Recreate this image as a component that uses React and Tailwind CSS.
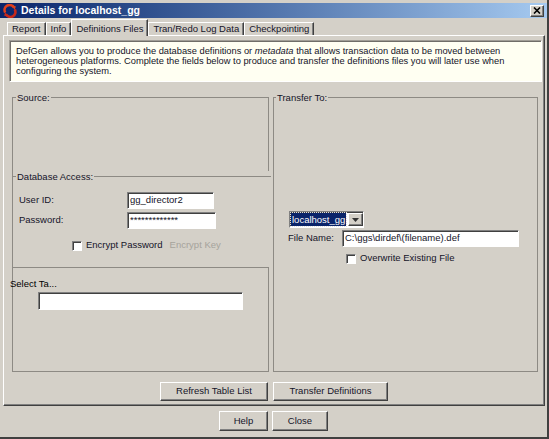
import React from "react";

// Win2000 style bevels
const raised =
  "border border-t-white border-l-white border-r-[#404040] border-b-[#404040] shadow-[inset_-1px_-1px_0_#808080]";
const sunken =
  "border border-t-[#808080] border-l-[#808080] border-r-white border-b-white shadow-[inset_1px_1px_0_#404040]";
const groove = "border-[#8d8a84]";

function Logo() {
  return (
    <svg width="14" height="14" viewBox="0 0 14 14" className="shrink-0">
      <path d="M2.2 8.5 A5 5 0 0 1 11 3.6" fill="none" stroke="#e0401c" strokeWidth="2.6" />
      <path d="M11.8 5.5 A5 5 0 0 1 3 10.4" fill="none" stroke="#c8281a" strokeWidth="2.6" />
      <path d="M9.2 1.2 L13 2.4 L11.4 6 Z" fill="#e0401c" />
      <path d="M4.8 12.8 L1 11.6 L2.6 8 Z" fill="#c8281a" />
    </svg>
  );
}

function Checkbox() {
  return <span className={`w-[10px] h-[10px] bg-white shrink-0 ${sunken}`} />;
}

function GroupLabel({ children, className = "" }) {
  return (
    <span
      className={`self-start -mt-[6px] px-[1px] bg-[#d4d0c8] leading-[11px] whitespace-nowrap ${className}`}
    >
      {children}
    </span>
  );
}

function Tab({ label, active }) {
  if (active) {
    return (
      <div className="relative z-10 -mb-[1px] h-[17px] px-[4px] flex items-start pt-[2px] bg-[#d4d0c8] border-t border-l border-white border-r border-r-[#404040] shadow-[inset_-1px_0_0_#808080]">
        {label}
      </div>
    );
  }
  return (
    <div className="h-[13px] px-[4px] flex items-center bg-[#d4d0c8] border-t border-l border-white border-r border-r-[#404040] shadow-[inset_-1px_0_0_#808080]">
      {label}
    </div>
  );
}

export default function App() {
  return (
    <div className="w-[549px] h-[439px] bg-[#d4d0c8] flex flex-col border-r-2 border-b-2 border-[#404040] font-['Liberation_Sans',Arial,sans-serif] text-[9.5px] text-[#141428] overflow-hidden">
      {/* Title bar */}
      <div className="mt-[3px] h-[15px] flex items-center bg-linear-to-r from-[#0a246a] to-[#a6caf0] pl-[3px] pr-[3px]">
        <Logo />
        <span className="ml-[4px] text-white font-bold text-[10.5px] leading-none">
          Details for localhost_gg
        </span>
        <div className={`ml-auto w-[14px] h-[12px] bg-[#d4d0c8] flex items-center justify-center ${raised}`}>
          <svg width="8" height="7" viewBox="0 0 8 7">
            <path d="M1 0.5 L7 6.5 M7 0.5 L1 6.5" stroke="#000" strokeWidth="1.6" />
          </svg>
        </div>
      </div>

      {/* Tabs */}
      <div className="mt-[1px] h-[16px] flex items-end pl-[7px]">
        <Tab label="Report" />
        <Tab label="Info" />
        <Tab label="Definitions Files" active />
        <Tab label="Tran/Redo Log Data" />
        <Tab label="Checkpointing" />
      </div>

      {/* Tab panel */}
      <div className="ml-[3px] w-[542px] h-[371px] flex flex-col border-t border-l border-white border-r border-b border-r-[#404040] border-b-[#404040] shadow-[inset_-1px_-1px_0_#808080]">
        <div className="mt-[4px] ml-[5px] w-[533px] h-[42px] bg-[#fffff2] border border-[#a09d96] border-b-white border-r-white shadow-[inset_1px_1px_0_#6f6d68] pl-[6px] pt-[5px] text-[9.3px] leading-[10px] whitespace-nowrap">
          DefGen allows you to produce the database definitions or <i>metadata</i> that allows transaction data to be moved between
          <br />
          heterogeneous platforms. Complete the fields below to produce and transfer the definitions files you will later use when
          <br />
          configuring the system.
        </div>

        <div className="mt-[15px] ml-[8px] flex">
          {/* Left column */}
          <div className={`w-[259px] h-[275px] flex flex-col border-l ${groove}`}>
            <div className={`w-[256px] h-[74px] flex flex-col border-t border-r ${groove}`}>
              <GroupLabel className="ml-[3px]">Source:</GroupLabel>
            </div>

            <div className={`mt-[5px] w-[258px] h-[91px] flex flex-col border-t ${groove}`}>
              <GroupLabel className="ml-[3px]">Database Access:</GroupLabel>
              <div className="mt-[10px] flex items-center pl-[6px]">
                <span className="w-[108px]">User ID:</span>
                <div className={`w-[87px] h-[17px] bg-white flex items-center pl-[2px] ${sunken}`}>
                  gg_director2
                </div>
              </div>
              <div className="mt-[3px] flex items-center pl-[6px]">
                <span className="w-[108px]">Password:</span>
                <div className={`w-[89px] h-[17px] bg-white flex items-center pl-[2px] ${sunken}`}>
                  *************
                </div>
              </div>
              <div className="mt-[10px] h-[13px] flex items-center pl-[59px]">
                <Checkbox />
                <span className="ml-[4px]">Encrypt Password</span>
                <span className="ml-[7px] text-[#a6a39c]">Encrypt Key</span>
              </div>
            </div>

            <div className={`w-[256px] h-[105px] flex flex-col border-t border-r border-b ${groove}`}>
              <span className="-ml-[3px] mt-[10px] leading-[11px] text-black">Select Ta...</span>
              <div className={`mt-[3px] ml-[25px] w-[205px] h-[18px] bg-white ${sunken}`} />
            </div>
          </div>

          {/* Right column */}
          <div className={`ml-[2px] w-[265px] h-[275px] flex flex-col border ${groove}`}>
            <GroupLabel className="ml-[2px]">Transfer To:</GroupLabel>
            <div className={`mt-[108px] ml-[15px] w-[75px] h-[17px] bg-white flex items-center ${sunken}`}>
              <span className="ml-[1px] h-[13px] px-[1px] bg-[#0a246a] text-white leading-[13px] outline outline-1 outline-dotted outline-[#e0e0e0]">
                localhost_gg
              </span>
              <div className={`ml-auto w-[15px] h-[13px] bg-[#d4d0c8] flex items-center justify-center ${raised}`}>
                <svg width="7" height="4" viewBox="0 0 7 4">
                  <path d="M0 0 H7 L3.5 4 Z" fill="#333" />
                </svg>
              </div>
            </div>
            <div className="mt-[2px] ml-[14px] flex items-center">
              <span className="w-[54px]">File Name:</span>
              <div className={`w-[177px] h-[17px] bg-white flex items-center pl-[2px] ${sunken}`}>
                C:\ggs\dirdef\(filename).def
              </div>
            </div>
            <div className="mt-[5px] ml-[72px] h-[13px] flex items-center">
              <Checkbox />
              <span className="ml-[4px]">Overwrite Existing File</span>
            </div>
          </div>
        </div>

        <div className="mt-[10px] flex justify-center gap-[5px]">
          <button className={`w-[108px] h-[19px] bg-[#d4d0c8] ${raised}`}>Refresh Table List</button>
          <button className={`w-[115px] h-[19px] bg-[#d4d0c8] ${raised}`}>Transfer Definitions</button>
        </div>
      </div>

      <div className="mt-[5px] flex justify-center gap-[4px]">
        <button className={`w-[49px] h-[20px] bg-[#d4d0c8] ${raised}`}>Help</button>
        <button className={`w-[56px] h-[20px] bg-[#d4d0c8] ${raised}`}>Close</button>
      </div>
    </div>
  );
}
